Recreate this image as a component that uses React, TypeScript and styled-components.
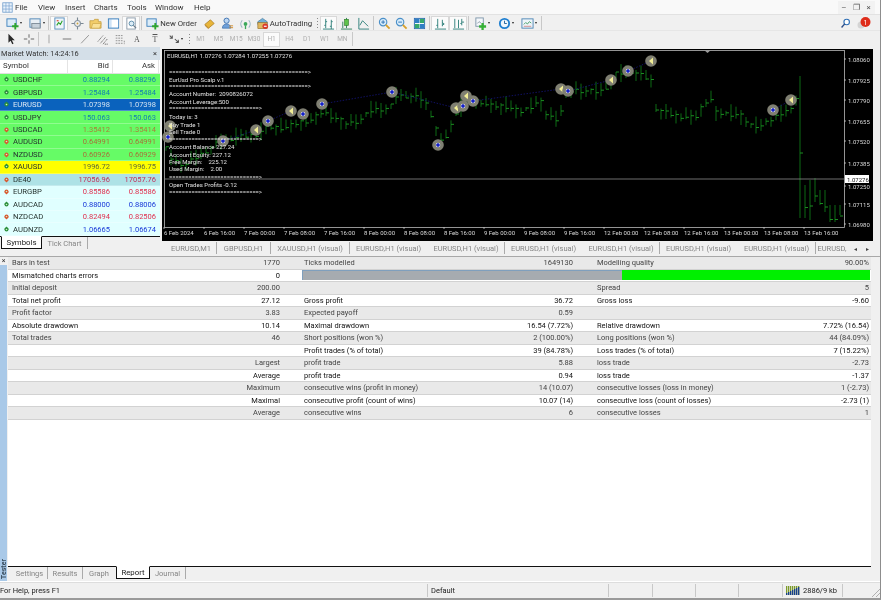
import React from 'react'
import styled, { createGlobalStyle } from 'styled-components'

const GlobalStyle = createGlobalStyle`
  html, body {
    margin: 0;
    padding: 0;
    background: #f0f0f0;
    overflow: hidden;
  }
  * {
    box-sizing: border-box;
  }
`

const Win = styled.div`
  width: 881px;
  height: 600px;
  display: flex;
  flex-direction: column;
  background: #f0f0f0;
  color: #222;
  font-family: Roboto, 'Liberation Sans', sans-serif;
  font-size: 7.5px;
  border-right: 1px solid #8d8d8d;
  border-bottom: 2px solid #9a9a9a;
  filter: blur(0.3px);
`

const MenuBar = styled.div`
  height: 15px;
  display: flex;
  align-items: center;
  background: #f9f9f9;
  border-bottom: 1px solid #e2e2e2;
  flex: none;
`

const AppIcon = styled.div`
  width: 15px;
  padding-left: 2px;
  display: flex;
`

const MenuItem = styled.span<{ $w: number }>`
  width: ${({ $w }) => $w}px;
  font-size: 8px;
  color: #333;
`

const WinControls = styled.div`
  margin-left: auto;
  display: flex;
  padding-right: 5px;
`

const WinBtn = styled.div`
  width: 12.5px;
  height: 13px;
  display: flex;
  align-items: center;
  justify-content: center;
  font-size: 8px;
  color: #555;
  background: #f2f2f2;
`

const ToolRow = styled.div<{ $h: number; $line?: boolean }>`
  height: ${({ $h }) => $h}px;
  display: flex;
  align-items: center;
  padding-left: 2px;
  flex: none;
  background: #f0f0f0;
  border-top: 1px solid ${({ $line }) => ($line ? '#e6e6e6' : 'transparent')};
`

const ToolBtn = styled.div<{ $w?: number; $pressed?: boolean }>`
  width: ${({ $w }) => $w || 18}px;
  height: 15px;
  flex: none;
  display: flex;
  align-items: center;
  justify-content: center;
  gap: 1px;
  color: #333;
  font-size: 7.8px;
  white-space: nowrap;
  background: ${({ $pressed }) => ($pressed ? '#fbfbfb' : 'transparent')};
  border: 1px solid ${({ $pressed }) => ($pressed ? '#d8d8d8' : 'transparent')};
`

const TimeBtn = styled(ToolBtn)`
  font-size: 6.5px;
  color: #b0b0b0;
`

const ToolSep = styled.div`
  width: 1px;
  height: 14px;
  margin: 0 1px;
  background: #c8c8c8;
  flex: none;
`

const Grip = styled.div`
  width: 6px;
  height: 13px;
  flex: none;
  background: radial-gradient(circle, #8a8a8a 0.7px, transparent 0.9px) center top / 3px 3px repeat-y;
`

const Caret = styled.span`
  width: 0;
  height: 0;
  flex: none;
  border-left: 1.5px solid transparent;
  border-right: 1.5px solid transparent;
  border-top: 2px solid #222;
`

const RightTools = styled.div`
  margin-left: auto;
  display: flex;
  align-items: center;
  gap: 5px;
  padding-right: 8px;
`

const Workspace = styled.div`
  height: 209px;
  flex: none;
  display: flex;
`

const MarketPane = styled.div`
  width: 160px;
  display: flex;
  flex-direction: column;
  flex: none;
`

const PaneTitle = styled.div`
  height: 13px;
  display: flex;
  align-items: center;
  justify-content: space-between;
  padding: 0 3px 0 1px;
  font-size: 7.4px;
  color: #333;
  background: #d4dfe8;
`

const MarketHead = styled.div`
  height: 14px;
  display: grid;
  grid-template-columns: 68px 45px 46px;
  background: #fff;
  border-bottom: 1px solid #e0e0e0;
`

const HeadCell = styled.div<{ $right?: boolean }>`
  padding: 1px 3px 0 3px;
  text-align: ${({ $right }) => ($right ? 'right' : 'left')};
  border-right: 1px solid #e4e4e4;
  font-size: 7.8px;
  color: #333;
`

const MarketBody = styled.div`
  height: 162px;
`

const QuoteRow = styled.div<{ $bg: string; $fg: string }>`
  height: 12.46px;
  display: grid;
  grid-template-columns: 68px 45px 46px;
  align-items: center;
  background: ${({ $bg }) => $bg};
  color: ${({ $fg }) => $fg};
  border-bottom: 1px solid rgba(255, 255, 255, 0.28);
`

const SymbolCell = styled.div<{ $selected?: boolean }>`
  display: flex;
  align-items: center;
  gap: 3px;
  padding-left: 3px;
  font-size: 7.7px;
  color: ${({ $selected }) => ($selected ? '#dce8f5' : '#26332f')};
`

const PriceCell = styled.div<{ $color: string }>`
  text-align: right;
  padding-right: 3px;
  font-size: 7.5px;
  color: ${({ $color }) => $color};
`

const MarketTabs = styled.div`
  height: 14px;
  display: flex;
  align-items: flex-start;
  border-top: 1px solid #111;
  background: #f0f0f0;
`

const ActiveTab = styled.div<{ $w: number; $ml: number }>`
  width: ${({ $w }) => $w}px;
  margin-left: ${({ $ml }) => $ml}px;
  height: 13px;
  margin-top: -1px;
  display: flex;
  align-items: center;
  justify-content: center;
  background: #fff;
  color: #222;
  font-size: 7.8px;
  border: 1px solid #111;
  border-top-color: #fff;
  flex: none;
`

const FlatTab = styled.div<{ $w: number; $sep?: boolean }>`
  width: ${({ $w }) => $w}px;
  height: 12px;
  display: flex;
  align-items: center;
  justify-content: center;
  flex: none;
  color: #858585;
  font-size: 7.5px;
  white-space: nowrap;
  border-right: 1px solid ${({ $sep }) => ($sep ? '#aaa' : 'transparent')};
`

const ChartPane = styled.div`
  flex: 1;
  display: flex;
  flex-direction: column;
  padding: 2px 0 0 2px;
  min-width: 0;
`

const ChartFrame = styled.div`
  height: 192px;
  width: 711px;
  background: #000;
  flex: none;
  display: flex;
`

const ChartTabs = styled.div`
  height: 14px;
  width: 711px;
  padding-left: 4px;
  display: flex;
  align-items: center;
  color: #8f8f8f;
`

const TabArrow = styled.span`
  width: 12px;
  font-size: 6px;
  text-align: center;
  color: #444;
`

const Tester = styled.div`
  flex: 1;
  display: flex;
  min-height: 0;
  border-top: 1px solid #a8a8a8;
`

const TesterSide = styled.div`
  width: 7px;
  flex: none;
  display: flex;
  flex-direction: column;
  align-items: center;
  justify-content: space-between;
  background: #a9c9e8;
  color: #3c4f60;
  font-size: 7px;
  font-weight: 700;
  padding-bottom: 2px;
`

const SideClose = styled.div`
  background: #f0f0f0;
  width: 7px;
  height: 8px;
  line-height: 8px;
  text-align: center;
  color: #333;
  font-weight: 400;
`

const SideLabel = styled.div`
  writing-mode: vertical-rl;
  transform: rotate(180deg);
`

const TesterMain = styled.div`
  flex: 1;
  display: flex;
  flex-direction: column;
  padding: 0 2px 0 1px;
  min-width: 0;
`

const Report = styled.div`
  height: 309px;
  width: 863px;
  background: #fff;
  flex: none;
`

const ReportRow = styled.div<{ $shaded: boolean }>`
  height: 12.5px;
  display: grid;
  grid-template-columns: 292px 293px 278px;
  align-items: center;
  background: ${({ $shaded }) => ($shaded ? '#e9e9e9' : '#fff')};
  border-bottom: 1px solid #d2d2d2;
  color: ${({ $shaded }) => ($shaded ? '#444' : '#111')};
`

const Pair = styled.div<{ $pr: number }>`
  display: flex;
  justify-content: space-between;
  padding: 0 ${({ $pr }) => $pr}px 0 4px;
  white-space: nowrap;
`

const QualityBar = styled.div`
  grid-column: 2 / 4;
  height: 10px;
  margin: 0 1px 0 2px;
  display: flex;
  background: #00f000;
`

const QualityFill = styled.div`
  height: 100%;
  background: #a6abb0;
  border-top: 1px solid #7f9fbd;
  border-left: 1px solid #7f9fbd;
`

const TesterTabs = styled.div`
  height: 15px;
  width: 863px;
  padding-left: 4px;
  display: flex;
  align-items: flex-start;
  border-top: 1px solid #111;
  flex: none;
`

const StatusBar = styled.div`
  height: 17px;
  flex: none;
  display: flex;
  align-items: center;
  background: #f0f0f0;
  border-top: 1px solid #fff;
  box-shadow: inset 0 1px 0 #ddd;
  font-size: 7.5px;
  color: #222;
`

const StatusCell = styled.div<{ $w: number; $flush?: boolean }>`
  width: ${({ $w }) => $w}px;
  height: 13px;
  flex: none;
  display: flex;
  align-items: center;
  gap: 3px;
  padding-left: ${({ $flush }) => ($flush ? 0 : 3)}px;
  border-right: 1px solid #c8c8c8;
  white-space: nowrap;
`

const ResizeGrip = styled.div`
  width: 10px;
  height: 10px;
  margin-left: auto;
  margin-top: 4px;
  background: repeating-linear-gradient(135deg, transparent 0 2px, #b0b0b0 2px 3px);
  clip-path: polygon(100% 0, 100% 100%, 0 100%);
`

type IconProps = { size?: number; children: React.ReactNode }
const Svg = ({ size = 13, children }: IconProps) => (
  <svg width={size} height={size} viewBox="0 0 14 14" fill="none">
    {children}
  </svg>
)

const Plus = () => <path d="M9 6.5h2v2.5h2.5v2h-2.5v2.5h-2v-2.5h-2.5v-2h2.5z" fill="#2fa52f" />
const Loupe = ({ sign }: { sign: string }) => (
  <>
    <circle cx="5.5" cy="5.5" r="4" fill="#d8ecfa" stroke="#4a8fc8" strokeWidth="1.2" />
    <path d="M8.5 8.5l4 4" stroke="#d8a02a" strokeWidth="2" />
    <path d={sign} stroke="#2f73b5" strokeWidth="1" />
  </>
)

const icons: Record<string, React.ReactNode> = {
  app: (
    <>
      <rect x="1" y="1" width="12" height="12" fill="#eaf2fb" stroke="#6f9ccb" />
      <path d="M1 5h12M1 9h12M5 1v12M9 1v12" stroke="#6f9ccb" strokeWidth="0.8" />
    </>
  ),
  newChart: (
    <>
      <rect x="1" y="2" width="10" height="8" fill="#dcecf8" stroke="#3f82bd" />
      <Plus />
    </>
  ),
  profile: (
    <>
      <rect x="1" y="2" width="11" height="9" fill="#e8eef4" stroke="#4f86b5" />
      <rect x="3" y="7" width="9" height="5" fill="#c7d1da" stroke="#7d8b97" />
    </>
  ),
  watch: (
    <>
      <rect x="2" y="1" width="10" height="12" fill="#eef5fa" stroke="#5a8fbd" />
      <path d="M4 9l2-3 2 2 2-4" stroke="#2da32d" strokeWidth="1.2" />
      <path d="M4 4h2" stroke="#d9402a" strokeWidth="1.2" />
    </>
  ),
  navigator: (
    <>
      <circle cx="7" cy="7" r="3.2" stroke="#8a97a3" strokeWidth="1.2" />
      <path d="M7 0.5v3M7 10.5v3M0.5 7h3M10.5 7h3" stroke="#7a8894" strokeWidth="1.2" />
      <circle cx="7" cy="7" r="1" fill="#c9a23c" />
    </>
  ),
  folder: (
    <>
      <path d="M1 4h4l1-1.5h4V5h3v7H1z" fill="#f2cd6a" stroke="#c29a3a" strokeWidth="0.8" />
      <path d="M4 7h9l-1.5 5H2.5z" fill="#f9e197" stroke="#c29a3a" strokeWidth="0.6" />
    </>
  ),
  panel: (
    <>
      <rect x="1.5" y="2" width="11" height="10" fill="#cfe3f6" stroke="#3f82bd" />
      <rect x="5" y="3" width="7" height="8" fill="#fff" />
    </>
  ),
  docZoom: (
    <>
      <rect x="2" y="1" width="9" height="12" fill="#fff" stroke="#8a9aa8" />
      <circle cx="7" cy="7" r="2.6" fill="#dcecf6" stroke="#5b8aa8" />
      <path d="M9 9l3 3" stroke="#6a7a88" strokeWidth="1.2" />
    </>
  ),
  gold: (
    <>
      <path d="M2 8l6-5 4 4-6 5z" fill="#e8b53a" stroke="#a8791e" strokeWidth="0.8" />
      <path d="M2 8l4 4v1.2L2 9.4z" fill="#b9842a" />
    </>
  ),
  person: (
    <>
      <circle cx="6" cy="4" r="2.8" fill="#bcd6f2" stroke="#3f72b0" />
      <path d="M1.5 12c0-3 2-4.5 4.5-4.5s4.5 1.5 4.5 4.5z" fill="#6fa0d8" stroke="#3f72b0" strokeWidth="0.8" />
      <path d="M9 9.5h4M9 11.5h4" stroke="#d08a2a" strokeWidth="1" />
    </>
  ),
  signal: (
    <>
      <circle cx="7" cy="7.5" r="2" fill="#3aa85a" />
      <path d="M3.5 3.5a6 6 0 0 0 0 8M10.5 3.5a6 6 0 0 1 0 8" stroke="#9ab6c4" strokeWidth="1.2" />
      <path d="M7 9v4" stroke="#3aa85a" strokeWidth="1.4" />
    </>
  ),
  auto: (
    <>
      <path d="M2 5l5-3.5L12 5v3H2z" fill="#6fb0d8" stroke="#3a7096" strokeWidth="0.7" />
      <rect x="2" y="6" width="10" height="6.5" fill="#e0b860" stroke="#94702a" strokeWidth="0.7" />
      <circle cx="10" cy="10" r="3" fill="#d83a2a" />
      <rect x="8.5" y="9.4" width="3" height="1.2" fill="#fff" />
    </>
  ),
  bars: <path d="M4 2v10M2.5 9H4M4 5h1.5M10 3v10M8.5 10H10M10 5h1.5M1 13h12" stroke="#2f7f7a" strokeWidth="1" />,
  candles: (
    <>
      <path d="M7 1v11M3 5v7M1 13h12" stroke="#2f7f5a" strokeWidth="1" />
      <rect x="5" y="2.5" width="4" height="6.5" fill="#5fc24a" stroke="#2f7f2a" strokeWidth="0.7" />
    </>
  ),
  line: <path d="M2 1v12h11M3 9l3-5 6 6" stroke="#2f7f7a" strokeWidth="1" />,
  zoomIn: <Loupe sign="M3.5 5.5h4M5.5 3.5v4" />,
  zoomOut: <Loupe sign="M3.5 5.5h4" />,
  tile: (
    <>
      <rect x="1.5" y="1.5" width="11" height="11" fill="#fff" stroke="#2f6fb5" />
      <rect x="2" y="2" width="5" height="4.5" fill="#2f7fc5" />
      <rect x="7.5" y="2" width="4.5" height="4.5" fill="#35a86a" />
      <rect x="2" y="7.5" width="5" height="4.5" fill="#35a86a" />
      <rect x="7.5" y="7.5" width="4.5" height="4.5" fill="#2f7fc5" />
    </>
  ),
  shift: <path d="M4 2v10M2.5 9H4M1 13h12M9 3v7M9 6l2 1.5L9 9" stroke="#2f7f7a" strokeWidth="1" />,
  scroll: <path d="M3 2v10M7 3v9M1 13h12M10.5 2v7M10.5 5.5h2.5M9 7h1.5" stroke="#2f7f7a" strokeWidth="1" />,
  indicator: (
    <>
      <rect x="2" y="1" width="8" height="9" fill="#f4f7fa" stroke="#7f97aa" />
      <path d="M3.5 7l2-2 2 1.5" stroke="#8a9aa8" />
      <path d="M8 6.5h2.5v2.5h2.5v2.5h-2.5v2.5h-2.5v-2.5h-2.5v-2.5h2.5z" fill="#35b035" />
    </>
  ),
  clock: (
    <>
      <circle cx="7" cy="7" r="5" fill="#eef6fc" stroke="#1f7fd0" strokeWidth="2" />
      <path d="M7 4v3h2.5" stroke="#1f5f98" strokeWidth="1" />
    </>
  ),
  template: (
    <>
      <rect x="1" y="2" width="12" height="10" fill="#eef5fa" stroke="#4f86b5" />
      <path d="M3 8l2-2 2 1.5 2-2.5 2 1.5" stroke="#4aa06a" />
      <path d="M3 10h8" stroke="#d08a8a" />
    </>
  ),
  cursor: <path d="M4 1v10.5l2.5-2.5 2 4 1.5-.8-2-3.8h3.4z" fill="#2a2a2a" />,
  cross: <path d="M7 1.5v4M7 8.5v4M1 7h4M9 7h4" stroke="#555" strokeWidth="1" />,
  vline: <path d="M7 2v10" stroke="#999" strokeWidth="1" />,
  hline: <path d="M2 7h10" stroke="#666" strokeWidth="1" />,
  trend: <path d="M2.5 12L11.5 2.5" stroke="#888" strokeWidth="1" />,
  channel: <path d="M1 10l6-7M4 12l6-7M7 13l5-6M9 13h4" stroke="#666" strokeWidth="1" strokeDasharray="1.5 0.6" />,
  fib: <path d="M2 3h8M2 6h8M2 9h8M2 12h8M12 9v4" stroke="#888" strokeWidth="1" strokeDasharray="2 1" />,
  arrows: <path d="M2 3l3 3M5 3v3H2M8 7l4 4M12 8v3H9" stroke="#555" strokeWidth="1.2" />,
  search: (
    <>
      <circle cx="8.5" cy="5" r="3.5" fill="#fff" stroke="#2f6fb5" strokeWidth="1.4" />
      <path d="M6 7.5L2 12" stroke="#2f4f88" strokeWidth="1.8" />
    </>
  ),
}

const Icon = ({ name, size }: { name: string; size?: number }) => <Svg size={size}>{icons[name]}</Svg>

const LetterIcon = styled.span<{ $line?: boolean }>`
  font-size: 8px;
  color: #555;
  font-family: 'Liberation Serif', serif;
  text-decoration: ${({ $line }) => ($line ? 'overline' : 'none')};
`

const Badge = () => (
  <svg width="16" height="14" viewBox="0 0 16 14">
    <circle cx="5" cy="9" r="3.5" fill="#d4d4d4" />
    <circle cx="9.5" cy="6" r="5" fill="#de2c1a" />
    <text x="9.5" y="8.5" fontSize="7" fill="#fff" textAnchor="middle" fontFamily="Roboto, sans-serif">
      1
    </text>
  </svg>
)

const Arrow = ({ up }: { up: boolean }) => (
  <svg width="7" height="7" viewBox="0 0 7 7" style={{ flex: 'none' }}>
    <circle cx="3.5" cy="3.5" r="2" fill={up ? '#2a8f3a' : '#d8562e'} />
    {up ? (
      <path d="M3.5 0.5L6 3.2H1z" fill="#2a8f3a" />
    ) : (
      <path d="M3.5 6.5L6 3.8H1z" fill="#d8562e" />
    )}
    <circle cx="3.5" cy="3.5" r="0.8" fill="#cfeec8" />
  </svg>
)

const GREEN = '#66fb66'
const CYAN = '#e0ffff'
const quotes = [
  { s: 'USDCHF', b: '0.88294', a: '0.88296', up: true, bg: GREEN, c: '#127fb0' },
  { s: 'GBPUSD', b: '1.25484', a: '1.25484', up: true, bg: GREEN, c: '#127fb0' },
  { s: 'EURUSD', b: '1.07398', a: '1.07398', up: true, bg: '#0a62bd', c: '#cfe0f0' },
  { s: 'USDJPY', b: '150.063', a: '150.063', up: true, bg: GREEN, c: '#127fb0' },
  { s: 'USDCAD', b: '1.35412', a: '1.35414', up: false, bg: GREEN, c: '#a8803a' },
  { s: 'AUDUSD', b: '0.64991', a: '0.64991', up: false, bg: GREEN, c: '#a8703a' },
  { s: 'NZDUSD', b: '0.60926', a: '0.60929', up: false, bg: GREEN, c: '#a8703a' },
  { s: 'XAUUSD', b: '1996.72', a: '1996.75', up: true, bg: '#ffff00', c: '#5f6a3a' },
  { s: 'DE40', b: '17056.96', a: '17057.76', up: false, bg: '#aee2e6', c: '#c0305a' },
  { s: 'EURGBP', b: '0.85586', a: '0.85586', up: false, bg: CYAN, c: '#e0304f' },
  { s: 'AUDCAD', b: '0.88000', a: '0.88006', up: true, bg: CYAN, c: '#1838d8' },
  { s: 'NZDCAD', b: '0.82494', a: '0.82506', up: false, bg: CYAN, c: '#e0304f' },
  { s: 'AUDNZD', b: '1.06665', a: '1.06674', up: true, bg: CYAN, c: '#1838d8' },
]

// [screen x, bar level] key points, the bars are interpolated between them
const levels: number[][] = [
  [164, 145], [172, 160], [185, 165], [200, 155], [222, 140], [240, 137], [255, 135], [268, 127], [285, 128],
  [300, 122], [312, 120], [322, 112], [335, 118], [348, 124], [360, 120], [372, 110], [390, 108], [396, 96],
  [410, 96], [424, 100], [430, 112], [436, 128], [442, 145], [450, 128], [456, 112], [466, 104], [478, 100],
  [488, 106], [505, 106], [520, 112], [532, 106], [540, 100], [545, 113], [555, 120], [560, 114], [566, 96],
  [572, 90], [600, 92], [610, 84], [616, 74], [632, 71], [650, 80], [654, 82], [656, 108], [668, 114], [690, 118],
  [698, 116], [702, 105], [710, 97], [716, 113], [740, 115], [750, 125], [762, 126], [775, 117], [785, 110],
  [790, 113], [797, 95],
]
const lateBars = [
  [800, 76, 218], [805, 185, 218], [810, 180, 220], [815, 178, 202], [820, 190, 205], [825, 190, 212],
  [830, 205, 222], [835, 205, 222], [840, 205, 215],
]
const levelAt = (x: number) => {
  for (let i = 1; i < levels.length; i += 1) {
    if (x <= levels[i][0]) {
      const [x0, y0] = levels[i - 1]
      const [x1, y1] = levels[i]
      return y0 + ((y1 - y0) * (x - x0)) / (x1 - x0)
    }
  }
  return 95
}

const ox = 162
const oy = 49
const bars: { x: number; hi: number; lo: number; close: number }[] = []
for (let x = 166; x < 800; x += 5) {
  const i = (x - 166) / 5
  const y = levelAt(x)
  const hi = y - (2 + ((i * 7) % 9))
  const lo = y + (2 + ((i * 5) % 8))
  const close = y + ((i * 3) % 5) - 2
  bars.push({ x, hi, lo, close })
}
lateBars.forEach(([x, hi, lo]) => bars.push({ x, hi, lo, close: (hi + lo) / 2 + 6 }))

const trades: { x: number; y: number; buy: boolean }[] = [
  { x: 170, y: 126, buy: false }, { x: 168, y: 137, buy: true }, { x: 223, y: 141, buy: true },
  { x: 256, y: 130, buy: false }, { x: 268, y: 121, buy: true }, { x: 291, y: 111, buy: false },
  { x: 303, y: 114, buy: true }, { x: 322, y: 104, buy: true }, { x: 392, y: 92, buy: true },
  { x: 438, y: 145, buy: true }, { x: 456, y: 108, buy: false }, { x: 463, y: 106, buy: true },
  { x: 466, y: 96, buy: false }, { x: 473, y: 101, buy: true }, { x: 561, y: 89, buy: false },
  { x: 568, y: 91, buy: true }, { x: 611, y: 80, buy: false }, { x: 628, y: 71, buy: true },
  { x: 651, y: 61, buy: false }, { x: 773, y: 110, buy: true }, { x: 791, y: 100, buy: false },
]
const tradeLinks = [
  'M223 141L256 130', 'M268 121L291 111', 'M322 104L392 92L456 108', 'M473 101L561 89', 'M568 91L611 80',
  'M628 71L651 61', 'M773 110L791 100',
]

const prices = [
  ['1.08060', 59], ['1.07925', 80], ['1.07790', 100], ['1.07655', 121], ['1.07520', 141],
  ['1.07385', 163], ['1.07250', 186], ['1.07115', 204], ['1.06980', 224],
] as const
const times = [
  '6 Feb 2024', '6 Feb 16:00', '7 Feb 00:00', '7 Feb 08:00', '7 Feb 16:00', '8 Feb 00:00', '8 Feb 08:00',
  '8 Feb 16:00', '9 Feb 00:00', '9 Feb 08:00', '9 Feb 16:00', '12 Feb 00:00', '12 Feb 08:00', '12 Feb 16:00',
  '13 Feb 00:00', '13 Feb 08:00', '13 Feb 16:00',
]
const overlay: [string, number][] = [
  ['EurUsd Pro Scalp v.1', 79], ['Account Number:  2090826072', 93], ['Account Leverage:500', 101],
  ['Today is: 3', 116], ['Buy Trade 1', 124], ['Sell Trade 0', 131], ['Account Balance 227.24', 146],
  ['Account Equity: 227.12', 154], ['Free Margin:    225.12', 161], ['Used Margin:    2.00', 168],
  ['Open Trades Profits -0.12', 184],
]
const rules: [number, number][] = [[72, 311], [86, 311], [108, 262], [139, 262], [177, 262], [192, 262]]

const ChartPicture = () => (
  <svg width="711" height="192" viewBox={`${ox} ${oy} 711 192`} fontFamily="Roboto, 'Liberation Sans', sans-serif">
    <rect x="164.5" y="50.5" width="680" height="177" fill="#000" stroke="#b8b8b8" strokeWidth="0.8" />
    {bars.map((b) => (
      <g key={b.x}>
        <path d={`M${b.x} ${b.hi}V${b.lo}`} stroke="#0c6a14" strokeWidth="1" />
        <path d={`M${b.x} ${b.close}h3`} stroke="#1a8c20" strokeWidth="1" />
      </g>
    ))}
    {tradeLinks.map((d) => (
      <path key={d} d={d} stroke="#14147a" strokeWidth="0.8" strokeDasharray="1.5 1.5" fill="none" />
    ))}
    <path d="M164 179H844" stroke="#8c8c8c" strokeWidth="0.8" />
    <path d="M704 50h7l-3.5 3z" fill="#9a9a9a" />
    {trades.map((t) => (
      <g key={`${t.x}-${t.y}`}>
        <circle cx={t.x} cy={t.y} r="5.8" fill="#7f7f72" />
        {t.buy ? (
          <>
            <circle cx={t.x} cy={t.y} r="2.3" fill="#e8e8f0" />
            <path d={`M${t.x} ${t.y - 2.2}l2.2 2.2-2.2 2.2-2.2-2.2z`} fill="#1420c8" />
          </>
        ) : (
          <path d={`M${t.x + 2} ${t.y - 3.5}v7l-4-3.5z`} fill="#f2ee96" />
        )}
      </g>
    ))}
    <g fill="#e0e0e0" fontSize="6.05">
      <text x="167" y="57.5">EURUSD,H1  1.07276 1.07284 1.07255 1.07276</text>
      {overlay.map(([t, y]) => (
        <text key={t} x="169" y={y + 2.5} xmlSpace="preserve">
          {t}
        </text>
      ))}
      {rules.map(([y, end]) => (
        <text key={y} x="169" y={y + 2} textLength={end - 169} lengthAdjust="spacing">
          {`${'='.repeat(Math.round((end - 169) / 3.3))}>`}
        </text>
      ))}
    </g>
    <g fill="#d8d8d8" fontSize="6">
      {times.map((t, i) => (
        <text key={t} x={164 + i * 40} y="234.5">
          {t}
        </text>
      ))}
      {prices.map(([p, y]) => (
        <text key={p} x="848" y={y + 2.5}>
          {p}
        </text>
      ))}
    </g>
    <g stroke="#c8c8c8" strokeWidth="0.8">
      {times.map((t, i) => (
        <path key={t} d={`M${164 + i * 40} 227v2`} />
      ))}
      {prices.map(([p, y]) => (
        <path key={p} d={`M844 ${y}h2`} />
      ))}
    </g>
    <rect x="845" y="175" width="24" height="8" fill="#fff" />
    <text x="847" y="181.5" fontSize="6" fill="#222">
      1.07276
    </text>
  </svg>
)

const chartTabs: [string, number, boolean][] = [
  ['EURUSD,M1', 51, true], ['GBPUSD,H1', 54, true], ['XAUUSD,H1 (visual)', 79, true],
  ['EURUSD,H1 (visual)', 78, false], ['EURUSD,H1 (visual)', 77, true], ['EURUSD,H1 (visual)', 78, false],
  ['EURUSD,H1 (visual)', 77, true], ['EURUSD,H1 (visual)', 78, false], ['EURUSD,H1 (visual)', 78, true],
]

type Cell = [string, string]
const reportRows: (Cell | null)[][] = [
  [['Bars in test', '1770'], ['Ticks modelled', '1649130'], ['Modelling quality', '90.00%']],
  [['Mismatched charts errors', '0']],
  [['Initial deposit', '200.00'], null, ['Spread', '5']],
  [['Total net profit', '27.12'], ['Gross profit', '36.72'], ['Gross loss', '-9.60']],
  [['Profit factor', '3.83'], ['Expected payoff', '0.59'], null],
  [['Absolute drawdown', '10.14'], ['Maximal drawdown', '16.54 (7.72%)'], ['Relative drawdown', '7.72% (16.54)']],
  [['Total trades', '46'], ['Short positions (won %)', '2 (100.00%)'], ['Long positions (won %)', '44 (84.09%)']],
  [null, ['Profit trades (% of total)', '39 (84.78%)'], ['Loss trades (% of total)', '7 (15.22%)']],
  [['', 'Largest'], ['profit trade', '5.88'], ['loss trade', '-2.73']],
  [['', 'Average'], ['profit trade', '0.94'], ['loss trade', '-1.37']],
  [['', 'Maximum'], ['consecutive wins (profit in money)', '14 (10.07)'], ['consecutive losses (loss in money)', '1 (-2.73)']],
  [['', 'Maximal'], ['consecutive profit (count of wins)', '10.07 (14)'], ['consecutive loss (count of losses)', '-2.73 (1)']],
  [['', 'Average'], ['consecutive wins', '6'], ['consecutive losses', '1']],
]
const pairPadding = [20, 20, 2]

const menus: [string, number][] = [
  ['File', 23], ['View', 27], ['Insert', 29], ['Charts', 33], ['Tools', 28], ['Window', 39], ['Help', 30],
]
const timeframes = ['M1', 'M5', 'M15', 'M30', 'H1', 'H4', 'D1', 'W1', 'MN']

const MemoryIcon = () => (
  <svg width="14" height="9" viewBox="0 0 14 9">
    {[0, 2, 4, 6, 8, 10, 12].map((x, i) => (
      <g key={x}>
        <rect x={x} y="0" width="1.3" height="9" fill="#7c9a2a" />
        <rect x={x} y={7 - i} width="1.3" height={2 + i} fill="#173f8c" />
      </g>
    ))}
  </svg>
)

export default function App() {
  return (
    <>
      <GlobalStyle />
      <Win>
        <MenuBar>
          <AppIcon>
            <Icon name="app" size={11} />
          </AppIcon>
          {menus.map(([m, w]) => (
            <MenuItem key={m} $w={w}>
              {m}
            </MenuItem>
          ))}
          <WinControls>
            <WinBtn>–</WinBtn>
            <WinBtn>❐</WinBtn>
            <WinBtn>×</WinBtn>
          </WinControls>
        </MenuBar>

        <ToolRow $h={15}>
          <ToolBtn $w={24}><Icon name="newChart" /><Caret /></ToolBtn>
          <ToolBtn $w={21}><Icon name="profile" /><Caret /></ToolBtn>
          <ToolSep />
          <ToolBtn $pressed><Icon name="watch" /></ToolBtn>
          <ToolBtn><Icon name="navigator" /></ToolBtn>
          <ToolBtn><Icon name="folder" /></ToolBtn>
          <ToolBtn><Icon name="panel" /></ToolBtn>
          <ToolBtn $pressed><Icon name="docZoom" /></ToolBtn>
          <ToolSep />
          <ToolBtn $w={57}><Icon name="newChart" />New Order</ToolBtn>
          <ToolBtn><Icon name="gold" /></ToolBtn>
          <ToolBtn><Icon name="person" /></ToolBtn>
          <ToolBtn><Icon name="signal" /></ToolBtn>
          <ToolBtn $w={60}><Icon name="auto" />AutoTrading</ToolBtn>
          <Grip />
          <ToolBtn $w={17} $pressed><Icon name="bars" /></ToolBtn>
          <ToolBtn><Icon name="candles" /></ToolBtn>
          <ToolBtn $w={17}><Icon name="line" /></ToolBtn>
          <ToolSep />
          <ToolBtn><Icon name="zoomIn" /></ToolBtn>
          <ToolBtn $w={17}><Icon name="zoomOut" /></ToolBtn>
          <ToolBtn><Icon name="tile" /></ToolBtn>
          <ToolSep />
          <ToolBtn $pressed><Icon name="shift" /></ToolBtn>
          <ToolBtn $pressed><Icon name="scroll" /></ToolBtn>
          <ToolSep />
          <ToolBtn $w={24}><Icon name="indicator" /><Caret /></ToolBtn>
          <ToolBtn $w={23}><Icon name="clock" /><Caret /></ToolBtn>
          <ToolBtn $w={23}><Icon name="template" /><Caret /></ToolBtn>
          <ToolSep />
          <RightTools>
            <Icon name="search" size={11} />
            <Badge />
          </RightTools>
        </ToolRow>

        <ToolRow $h={17} $line>
          <ToolBtn><Icon name="cursor" size={12} /></ToolBtn>
          <ToolBtn $w={17}><Icon name="cross" size={12} /></ToolBtn>
          <ToolSep />
          <ToolBtn><Icon name="vline" size={12} /></ToolBtn>
          <ToolBtn><Icon name="hline" size={12} /></ToolBtn>
          <ToolBtn><Icon name="trend" size={12} /></ToolBtn>
          <ToolBtn $w={17}><Icon name="channel" size={12} /></ToolBtn>
          <ToolBtn $w={17}><Icon name="fib" size={12} /></ToolBtn>
          <ToolBtn><LetterIcon>A</LetterIcon></ToolBtn>
          <ToolBtn><LetterIcon $line>T</LetterIcon></ToolBtn>
          <ToolBtn $w={22}><Icon name="arrows" size={12} /><Caret /></ToolBtn>
          <Grip />
          {timeframes.map((t) => (
            <TimeBtn key={t} $w={17.7} $pressed={t === 'H1'}>
              {t}
            </TimeBtn>
          ))}
          <ToolSep />
        </ToolRow>

        <Workspace>
          <MarketPane>
            <PaneTitle>
              <span>Market Watch: 14:24:16</span>
              <span>×</span>
            </PaneTitle>
            <MarketHead>
              <HeadCell>Symbol</HeadCell>
              <HeadCell $right>Bid</HeadCell>
              <HeadCell $right>Ask</HeadCell>
            </MarketHead>
            <MarketBody>
              {quotes.map((q) => (
                <QuoteRow key={q.s} $bg={q.bg} $fg={q.c}>
                  <SymbolCell $selected={q.s === 'EURUSD'}>
                    <Arrow up={q.up} />
                    {q.s}
                  </SymbolCell>
                  <PriceCell $color={q.c}>{q.b}</PriceCell>
                  <PriceCell $color={q.c}>{q.a}</PriceCell>
                </QuoteRow>
              ))}
            </MarketBody>
            <MarketTabs>
              <ActiveTab $w={41} $ml={1}>Symbols</ActiveTab>
              <FlatTab $w={46} $sep>Tick Chart</FlatTab>
            </MarketTabs>
          </MarketPane>

          <ChartPane>
            <ChartFrame>
              <ChartPicture />
            </ChartFrame>
            <ChartTabs>
              {chartTabs.map(([t, w, sep], i) => (
                <FlatTab key={`${t}-${i}`} $w={w} $sep={sep}>
                  {t}
                </FlatTab>
              ))}
              <FlatTab $w={33}>EURUSD,</FlatTab>
              <TabArrow>◂</TabArrow>
              <TabArrow>▸</TabArrow>
            </ChartTabs>
          </ChartPane>
        </Workspace>

        <Tester>
          <TesterSide>
            <SideClose>×</SideClose>
            <SideLabel>Tester</SideLabel>
          </TesterSide>
          <TesterMain>
            <Report>
              {reportRows.map((cells, r) => (
                <ReportRow key={r} $shaded={r % 2 === 0}>
                  {cells.map((c, i) =>
                    c ? (
                      <Pair key={i} $pr={pairPadding[i]}>
                        <span>{c[0]}</span>
                        <span>{c[1]}</span>
                      </Pair>
                    ) : (
                      <span key={i} />
                    ),
                  )}
                  {r === 1 && (
                    <QualityBar>
                      <QualityFill style={{ width: `${(320 / 568) * 100}%` }} />
                    </QualityBar>
                  )}
                </ReportRow>
              ))}
            </Report>
            <TesterTabs>
              <FlatTab $w={36} $sep>Settings</FlatTab>
              <FlatTab $w={35} $sep>Results</FlatTab>
              <FlatTab $w={33}>Graph</FlatTab>
              <ActiveTab $w={34} $ml={0}>Report</ActiveTab>
              <FlatTab $w={36} $sep>Journal</FlatTab>
            </TesterTabs>
          </TesterMain>
        </Tester>

        <StatusBar>
          <StatusCell $w={428} $flush>For Help, press F1</StatusCell>
          <StatusCell $w={181}>Default</StatusCell>
          <StatusCell $w={44} />
          <StatusCell $w={43} />
          <StatusCell $w={43} />
          <StatusCell $w={44} />
          <StatusCell $w={60}>
            <MemoryIcon />
            2886/9 kb
          </StatusCell>
          <ResizeGrip />
        </StatusBar>
      </Win>
    </>
  )
}
